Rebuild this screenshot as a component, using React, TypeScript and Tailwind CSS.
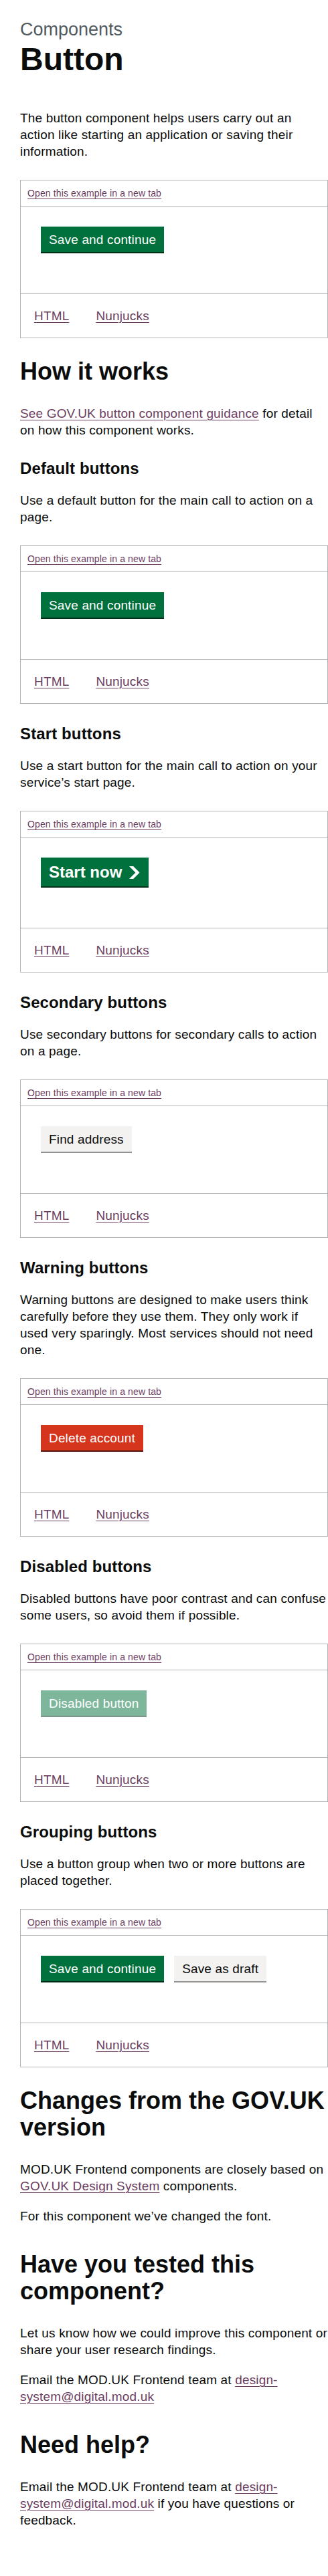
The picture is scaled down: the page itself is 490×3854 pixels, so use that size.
import type { ReactNode } from "react";

const link = "text-[#6b3e5f] underline decoration-1 underline-offset-[3px]";

function Btn({ kind = "primary", children }: { kind?: "primary" | "secondary" | "warning" | "disabled"; children: ReactNode }) {
  const styles = {
    primary: "bg-[#00703c] text-white shadow-[0_2px_0_#002d18]",
    secondary: "bg-[#f3f2f1] text-[#0b0c0c] shadow-[0_2px_0_#929191]",
    warning: "bg-[#d4351c] text-white shadow-[0_2px_0_#55150b]",
    disabled: "bg-[#00703c] text-white shadow-[0_2px_0_#002d18] opacity-50",
  };
  return (
    <span className={`inline-block px-[12px] pt-[10px] pb-[9px] text-[19px] leading-[19px] ${styles[kind]}`}>
      {children}
    </span>
  );
}

function StartBtn() {
  return (
    <span className="inline-flex items-center bg-[#00703c] px-[12px] pt-[10px] pb-[9px] text-[24px] font-bold leading-[24px] tracking-normal text-white shadow-[0_2px_0_#002d18]">
      Start now
      <svg className="ml-[10px] h-[19px] w-[17.5px] shrink-0" viewBox="0 0 33 40" aria-hidden="true">
        <path fill="currentColor" d="M0 0h13l20 20-20 20H0l20-20z" />
      </svg>
    </span>
  );
}

// margin-top collapses with the paragraph's 20px bottom margin, so 30px gives the 30px gap
function Example({ children }: { children: ReactNode }) {
  return (
    <div className="mt-[30px] mb-[30px] border border-[#b1b4b6]">
      <div className="border-b border-[#b1b4b6] p-[10px] text-[14px] leading-[18px] tracking-[0.13px]">
        <a className={link}>Open this example in a new tab</a>
      </div>
      <div className="border-b border-[#b1b4b6] p-[30px]">
        <div className="mb-[32px] flex items-start gap-[15px]">{children}</div>
      </div>
      <div className="flex text-[19px] leading-[25px]">
        <a className={`${link} p-[20px]`}>HTML</a>
        <a className={`${link} p-[20px]`}>Nunjucks</a>
      </div>
    </div>
  );
}

const H2 = ({ children, after }: { children: ReactNode; after?: boolean }) => (
  <h2 className={`mb-[30px] text-[36px] font-bold leading-[40px] tracking-normal ${after ? "pt-[20px]" : ""}`}>
    {children}
  </h2>
);
const H3 = ({ children, after }: { children: ReactNode; after?: boolean }) => (
  <h3 className={`mb-[20px] text-[24px] font-bold leading-[30px] tracking-[0.12px] ${after ? "pt-[10px]" : ""}`}>
    {children}
  </h3>
);
const P = ({ children }: { children: ReactNode }) => <p className="mb-[20px] text-[19px] leading-[25px]">{children}</p>;

export default function App() {
  return (
    <div className="w-[490px] bg-white pt-[29px] pb-[70px] pl-[30px] font-['Liberation_Sans',Arial,sans-serif] tracking-[0.16px] text-[#0b0c0c]">
      <span className="mb-[5px] block text-[27px] leading-[30px] tracking-normal text-[#505a5f]">Components</span>
      <h1 className="mb-[50px] text-[48px] font-bold leading-[50px] tracking-normal">Button</h1>
      <P>
        The button component helps users carry out an action like starting an application or saving their information.
      </P>
      <Example>
        <Btn>Save and continue</Btn>
      </Example>

      <H2>How it works</H2>
      <P>
        <a className={link}>See GOV.UK button component guidance</a> for detail on how this component works.
      </P>

      <H3 after>Default buttons</H3>
      <P>Use a default button for the main call to action on a page.</P>
      <Example>
        <Btn>Save and continue</Btn>
      </Example>

      <H3>Start buttons</H3>
      <P>Use a start button for the main call to action on your service’s start page.</P>
      <Example>
        <StartBtn />
      </Example>

      <H3>Secondary buttons</H3>
      <P>Use secondary buttons for secondary calls to action on a page.</P>
      <Example>
        <Btn kind="secondary">Find address</Btn>
      </Example>

      <H3>Warning buttons</H3>
      <P>
        Warning buttons are designed to make users think carefully before they use them. They only work if used very
        sparingly. Most services should not need one.
      </P>
      <Example>
        <Btn kind="warning">Delete account</Btn>
      </Example>

      <H3>Disabled buttons</H3>
      <P>Disabled buttons have poor contrast and can confuse some users, so avoid them if possible.</P>
      <Example>
        <Btn kind="disabled">Disabled button</Btn>
      </Example>

      <H3>Grouping buttons</H3>
      <P>Use a button group when two or more buttons are placed together.</P>
      <Example>
        <Btn>Save and continue</Btn>
        <Btn kind="secondary">Save as draft</Btn>
      </Example>

      <H2>Changes from the GOV.UK version</H2>
      <P>
        MOD.UK Frontend components are closely based on <a className={link}>GOV.UK Design System</a> components.
      </P>
      <P>For this component we’ve changed the font.</P>

      <H2 after>Have you tested this component?</H2>
      <P>Let us know how we could improve this component or share your user research findings.</P>
      <P>
        Email the MOD.UK Frontend team at <a className={link}>design-system@digital.mod.uk</a>
      </P>

      <H2 after>Need help?</H2>
      <P>
        Email the MOD.UK Frontend team at <a className={link}>design-system@digital.mod.uk</a> if you have questions
        or feedback.
      </P>
    </div>
  );
}
